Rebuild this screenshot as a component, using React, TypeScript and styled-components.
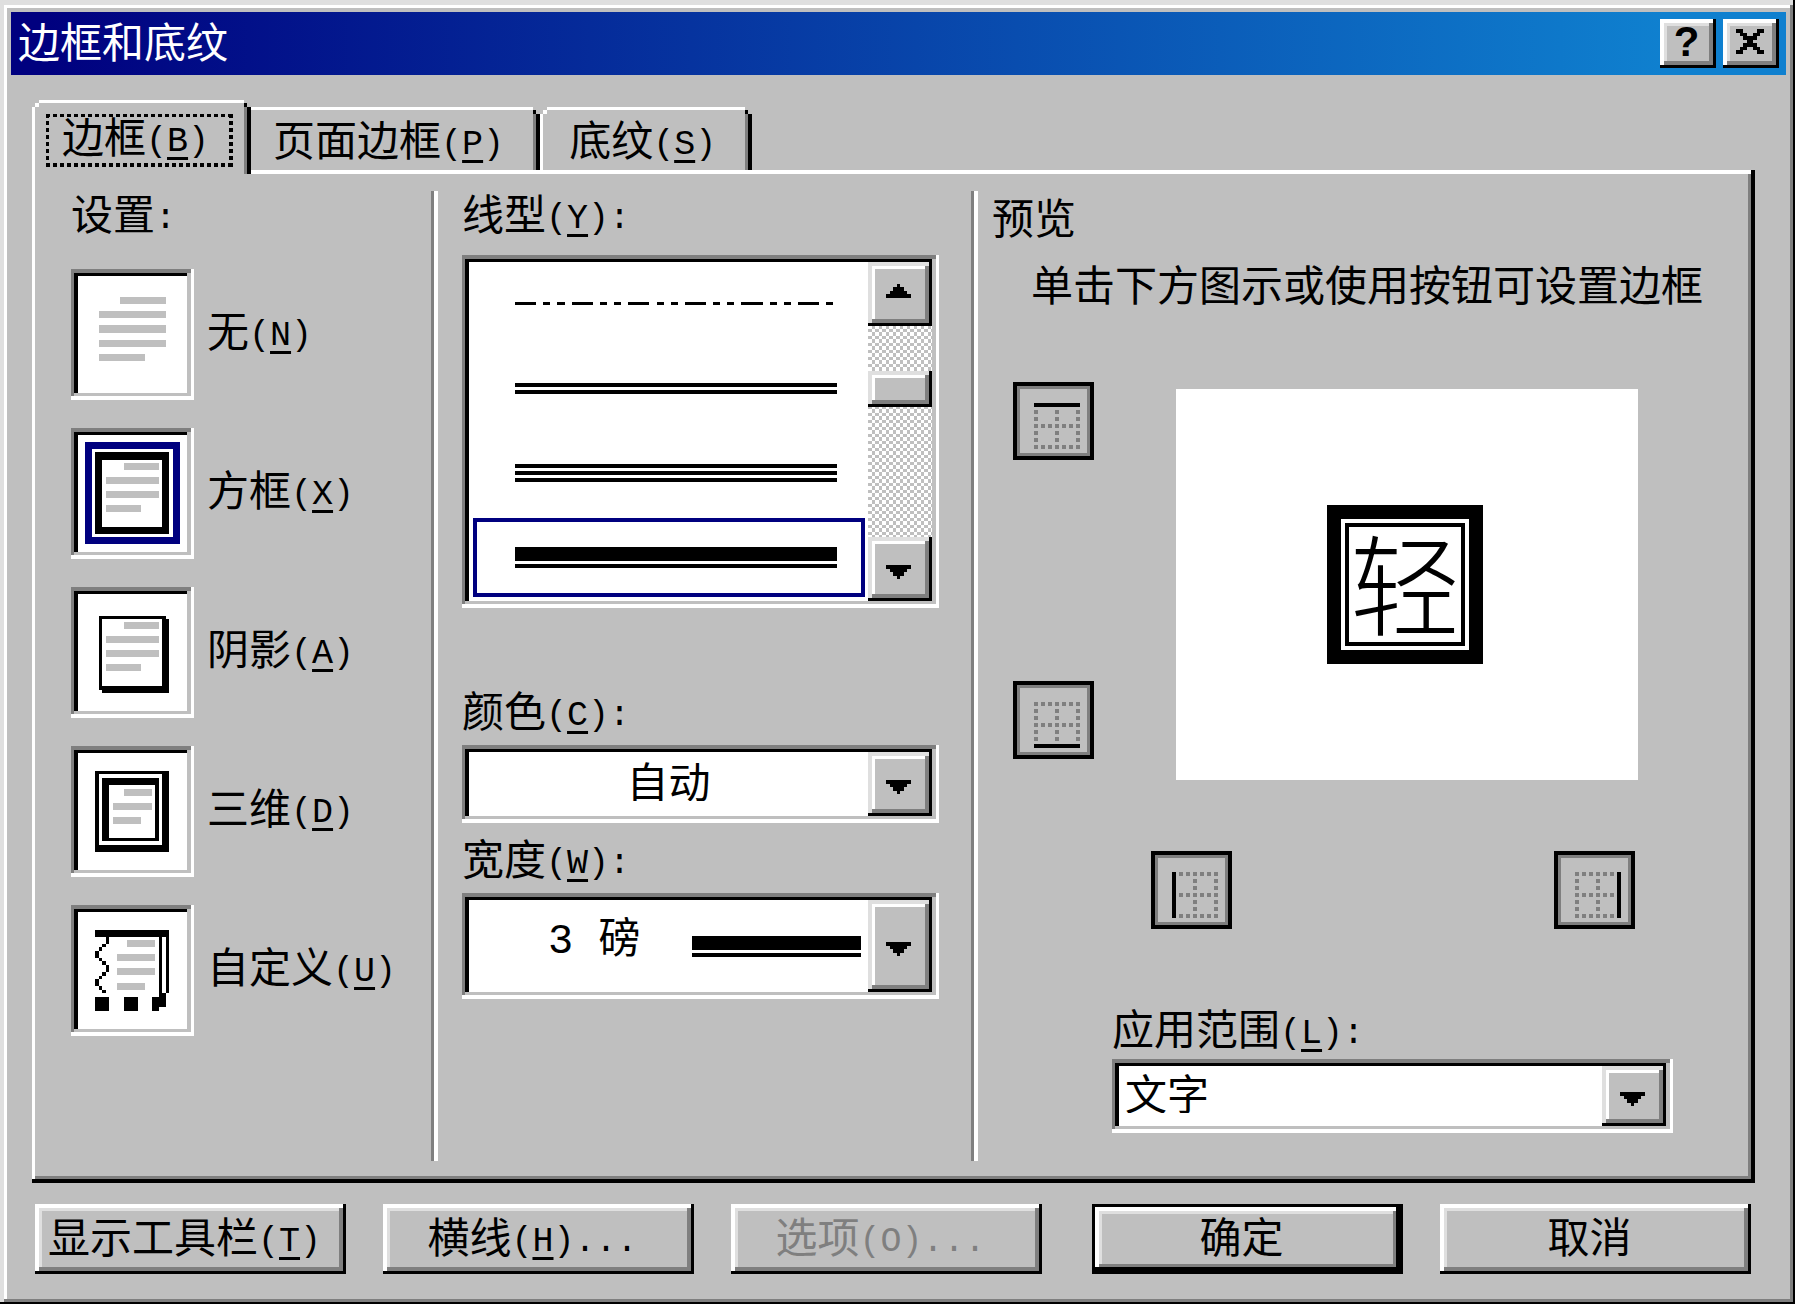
import React, { useState } from "react";
import styled, { createGlobalStyle, css } from "styled-components";

const face = "#bfbfbf";
const light = "#dfdfdf";
const shade = "#7f7f7f";
const navy = "#00007f";

const cjk = `"Noto Sans CJK SC", "Liberation Sans", sans-serif`;
const mono = `"Liberation Mono", "Noto Sans CJK SC", monospace`;

const GlobalStyle = createGlobalStyle`
  *, *::before, *::after { box-sizing: border-box; }
  body { margin: 0; background: ${face}; }
  button, input, select { font: inherit; color: inherit; margin: 0; border: 0; border-radius: 0; outline: 0; }
`;

const raised = css`
  background: ${face};
  box-shadow: inset -3px -3px #000, inset 4px 4px #fff, inset -7px -7px ${shade}, inset 7px 7px ${light};
`;

const raisedSoft = css`
  background: ${face};
  box-shadow: inset -3px -3px #000, inset 4px 4px ${light}, inset -7px -7px ${shade}, inset 7px 7px #fff;
`;

const sunken = css`
  background: #fff;
  box-shadow: inset -3px -4px #fff, inset 3px 4px ${shade}, inset -7px -7px ${face}, inset 7px 7px #000;
`;

const Window = styled.main`
  display: flex;
  flex-direction: column;
  min-height: 100vh;
  padding: 12px 9px 30px 11px;
  background: ${face};
  box-shadow: inset -2px -2px #000, inset 4px 5px ${light}, inset -5px -5px ${shade}, inset 7px 8px #fff;
  color: #000;
  font-family: ${cjk};
  font-size: 42px;
  line-height: 42px;
  white-space: nowrap;
`;

const TitleBar = styled.header`
  display: flex;
  gap: 7px;
  height: 63px;
  padding: 7px;
  background: linear-gradient(to right, ${navy} 2%, #0f80cf 93%);
`;

const Title = styled.h1`
  flex: 1;
  margin: 0;
  font-size: 42px;
  font-weight: 400;
  line-height: 42px;
  color: #fff;
`;

const CaptionButton = styled.button`
  ${raised}
  display: flex;
  align-items: center;
  justify-content: center;
  width: 56px;
  padding: 0 3px 4px 0;
  font-family: "Liberation Sans", sans-serif;
  font-size: 42px;
  font-weight: 700;
  line-height: 42px;
`;

const TabList = styled.div`
  display: flex;
  align-items: flex-end;
  margin: 25px 31px 0 21px;
`;

const Tab = styled.button<{ $active?: boolean }>`
  position: relative;
  z-index: ${(p) => (p.$active ? 1 : 0)};
  height: ${(p) => (p.$active ? 74 : 63)}px;
  margin-bottom: ${(p) => (p.$active ? -4 : 0)}px;
  padding: ${(p) => (p.$active ? "14px 18px 7px 14px" : "10px 36px 11px 29px")};
  background:
    linear-gradient(#fff, #fff) 3px 3px / 4px 4px no-repeat,
    linear-gradient(#fff, #fff) 7px 0 / calc(100% - 14px) 3px no-repeat,
    linear-gradient(#fff, #fff) 0 7px / 3px 100% no-repeat,
    linear-gradient(#000, #000) right 4px top 3px / 3px 4px no-repeat,
    linear-gradient(#000, #000) right 0 top 7px / 4px 100% no-repeat,
    linear-gradient(${shade}, ${shade}) right 4px top 7px / 3px 100% no-repeat,
    ${face};
  text-align: left;
  line-height: 42px;

  &:nth-child(2) { margin-left: -7px; }
`;

const dotsAcross = "repeating-linear-gradient(to right, #000 0 4px, transparent 4px 7px)";
const dotsDown = "repeating-linear-gradient(to bottom, #000 0 4px, transparent 4px 7px)";

const FocusRing = styled.span`
  display: block;
  padding: 0 24px 11px 16px;
  background:
    ${dotsAcross} 0 0 / 100% 3px no-repeat,
    ${dotsAcross} 0 100% / 100% 4px no-repeat,
    ${dotsDown} 0 0 / 3px 100% no-repeat,
    ${dotsDown} 100% 0 / 4px 100% no-repeat;
`;

const Half = styled.span`
  font-family: ${mono};
  font-size: 35px;
  line-height: 0;
  vertical-align: 2px;

  u {
    text-decoration-thickness: 3px;
    text-underline-offset: 6px;
    text-decoration-skip-ink: none;
  }
`;

const Panel = styled.section`
  flex: 1;
  display: grid;
  grid-template-columns: 396fr 7px 533fr 7px 770fr;
  margin: 0 31px 0 21px;
  padding: 21px 7px 22px 3px;
  box-shadow: inset -4px -4px #000, inset 3px 4px #fff, inset -7px -7px ${shade};
`;

const Divider = styled.div`
  background: linear-gradient(to right, ${shade} 3px, #fff 3px);
`;

const SettingsColumn = styled.fieldset`
  display: flex;
  flex-direction: column;
  gap: 28px;
  min-width: 0;
  margin: 0;
  padding: 0 0 0 36px;
  border: 0;
`;

const Legend = styled.legend`
  float: left;
  padding: 0;
  margin-bottom: 8px;
`;

const Setting = styled.label`
  display: grid;
  grid-template-columns: 123px 1fr;
  grid-template-rows: 131px;
  align-items: center;
  column-gap: 13px;

  svg { grid-area: 1 / 1; pointer-events: none; }
`;

const SettingRadio = styled.input`
  ${sunken}
  grid-area: 1 / 1;
  appearance: none;
  width: 123px;
  height: 131px;
`;

const SettingName = styled.span`
  padding-bottom: 12px;
`;

const StyleColumn = styled.div`
  display: flex;
  flex-direction: column;
  padding: 0 32px 0 24px;
`;

const Field = styled.div<{ $above?: number; $gap?: number }>`
  display: flex;
  flex-direction: column;
  gap: ${(p) => p.$gap ?? 15}px;
  margin-top: ${(p) => p.$above ?? 0}px;
`;

const ListBox = styled.div`
  ${sunken}
  display: grid;
  grid-template-columns: 1fr 64px;
  height: 353px;
  padding: 7px;
`;

const LineItems = styled.div`
  display: grid;
  grid-template-rows: repeat(4, 1fr);
`;

const LineItem = styled.label`
  display: grid;
  grid-template-columns: 1fr;
  align-items: center;
  padding: 2px 3px 4px 4px;
`;

const LineRadio = styled.input`
  grid-area: 1 / 1;
  appearance: none;
  align-self: stretch;

  &:checked { border: 4px solid ${navy}; }
`;

const LineArt = styled.div`
  grid-area: 1 / 1;
  display: grid;
  padding: 0 28px 0 42px;
  pointer-events: none;
`;

const ScrollBar = styled.div`
  display: flex;
  flex-direction: column;
  background: repeating-conic-gradient(at 4px 4px, ${face} 0 25%, #fff 0 50%) 0 0 / 7px 7px;
`;

const ScrollButton = styled.button<{ $up?: boolean }>`
  ${raisedSoft}
  display: flex;
  align-items: center;
  justify-content: center;
  height: 64px;
  padding: ${(p) => (p.$up ? "0 3px 7px 0" : "6px 3px 0 0")};
`;

const ScrollTrack = styled.div`
  flex: 1;
  padding-top: 45px;
`;

const ScrollThumb = styled.div`
  ${raisedSoft}
  height: 36px;
`;

const Combo = styled.div<{ $height: number }>`
  ${sunken}
  display: grid;
  grid-template-columns: 1fr 64px;
  height: ${(p) => p.$height}px;
  padding: 7px;
`;

const Select = styled.select<{ $centred?: boolean; $indent?: number; $mono?: boolean }>`
  grid-area: 1 / 1 / 2 / 3;
  appearance: none;
  min-width: 0;
  padding: 0 64px 8px ${(p) => p.$indent ?? 0}px;
  background: transparent;
  line-height: ${(p) => (p.$mono ? 64 : 42)}px;
  font-family: ${(p) => (p.$mono ? mono : cjk)};
  text-align-last: ${(p) => (p.$centred ? "center" : "left")};
`;

const ComboArrow = styled.span`
  ${raisedSoft}
  grid-area: 1 / 2;
  display: flex;
  align-items: center;
  justify-content: center;
  padding: 6px 3px 0 0;
  pointer-events: none;
`;

const WidthSample = styled.div`
  grid-area: 1 / 1;
  display: grid;
  align-self: center;
  justify-self: end;
  width: 169px;
  margin-right: 7px;
  pointer-events: none;
`;

const PreviewColumn = styled.div`
  display: flex;
  flex-direction: column;
  padding-top: 4px;
`;

const PreviewHeading = styled.h2`
  margin: 0 0 25px;
  padding-left: 14px;
  font-size: 42px;
  font-weight: 400;
  line-height: 42px;
`;

const Hint = styled.p`
  margin: 0 0 78px;
  padding-left: 53px;
`;

const Stage = styled.div`
  display: flex;
  gap: 82px;
  padding: 0 110px 0 35px;
`;

const SideButtons = styled.div`
  display: flex;
  flex-direction: column;
  justify-content: space-between;
  padding-bottom: 21px;
`;

const BottomButtons = styled.div`
  display: flex;
  justify-content: space-between;
  margin-top: 71px;
  padding: 0 113px 0 173px;
`;

const EdgeButton = styled.button`
  display: block;
  width: 81px;
  height: 78px;
  padding: 21px 14px 11px 21px;
  background: ${face};
  box-shadow: inset 0 0 0 4px #000, inset 0 0 0 7px ${shade};

  svg { display: block; }
`;

const Canvas = styled.div`
  flex: 1;
  display: flex;
  align-items: center;
  justify-content: center;
  height: 391px;
  margin-top: 7px;
  padding-right: 4px;
  background: #fff;
`;

const FramedText = styled.div`
  display: flex;
  align-items: center;
  justify-content: center;
  width: 156px;
  height: 159px;
  padding-bottom: 10px;
  box-shadow: inset 0 0 0 14px #000, inset 0 0 0 18px #fff, inset 0 0 0 22px #000;
  font-size: 110px;
  font-weight: 300;
  line-height: 110px;
`;

const ApplyField = styled(Field)`
  padding: 0 75px 0 134px;
`;

const Actions = styled.footer`
  display: flex;
  justify-content: space-between;
  gap: 37px;
  margin: 21px 35px 0 24px;
`;

const ActionGroup = styled.div`
  display: flex;
  gap: 37px;
`;

const ActionButton = styled.button<{ $default?: boolean }>`
  ${raised}
  width: 311px;
  height: 70px;
  padding: 0 12px 8px 0;
  line-height: 42px;

  &:disabled { color: ${shade}; }

  ${(p) =>
    p.$default &&
    css`
      box-shadow: inset 0 0 0 3px #000, inset -7px -7px #000, inset 7px 7px #fff,
        inset -10px -10px ${shade}, inset 10px 10px ${light};
    `}
`;

function Key({ k, after = "", plain = false }: { k: string; after?: string; plain?: boolean }) {
  return (
    <Half>
      ({plain ? k : <u>{k}</u>}){after}
    </Half>
  );
}

type Box = [number, number, number, number];

// Boxes are given as left, top, right, bottom.
function Boxes({ items, fill }: { items: Box[]; fill: string }) {
  return (
    <>
      {items.map(([l, t, r, b]) => (
        <rect key={`${l}-${t}-${r}-${b}`} x={l} y={t} width={r - l} height={b - t} fill={fill} />
      ))}
    </>
  );
}

const arrowDown: Box[] = [[0, 0, 25, 4], [4, 4, 21, 7], [7, 7, 18, 11], [11, 11, 14, 14]];
const arrowUp: Box[] = [[11, 0, 14, 3], [7, 3, 18, 7], [4, 7, 21, 10], [0, 10, 25, 14]];

function Arrow({ up = false }: { up?: boolean }) {
  return (
    <svg width="25" height="14" shapeRendering="crispEdges" aria-hidden="true">
      <Boxes fill="#000" items={up ? arrowUp : arrowDown} />
    </svg>
  );
}

function CloseIcon() {
  return (
    <svg width="28" height="25" shapeRendering="crispEdges" aria-hidden="true">
      <Boxes
        fill="#000"
        items={[
          [0, 0, 7, 4], [21, 0, 28, 4],
          [4, 4, 11, 7], [17, 4, 24, 7],
          [7, 7, 21, 11], [11, 11, 17, 14], [7, 14, 21, 18],
          [4, 18, 11, 21], [17, 18, 24, 21],
          [0, 21, 7, 25], [21, 21, 28, 25],
        ]}
      />
    </svg>
  );
}

const pageLines: Box[] = [[53, 35, 88, 42], [35, 49, 88, 56], [35, 63, 88, 70], [35, 77, 70, 84]];

const settingArt: Record<string, React.ReactNode> = {
  none: (
    <Boxes fill={face} items={[[49, 28, 95, 35], [28, 42, 95, 49], [28, 56, 95, 64], [28, 71, 95, 78], [28, 85, 74, 92]]} />
  ),
  box: (
    <>
      <Boxes fill="#000" items={[[24, 24, 98, 106]]} />
      <Boxes fill="#fff" items={[[31, 32, 91, 99]]} />
      <Boxes fill={face} items={pageLines} />
    </>
  ),
  shadow: (
    <>
      <Boxes fill="#000" items={[[28, 29, 95, 103], [31, 32, 98, 106]]} />
      <Boxes fill="#fff" items={[[31, 32, 91, 99]]} />
      <Boxes fill={face} items={pageLines} />
    </>
  ),
  threeD: (
    <>
      <Boxes fill="#000" items={[[24, 25, 98, 106]]} />
      <Boxes fill="#fff" items={[[28, 28, 91, 99]]} />
      <Boxes fill="#000" items={[[31, 32, 88, 95]]} />
      <Boxes fill="#fff" items={[[38, 39, 84, 92]]} />
      <Boxes fill={face} items={[[53, 43, 81, 50], [42, 57, 81, 64], [42, 71, 70, 78]]} />
    </>
  ),
  custom: (
    <>
      <Boxes
        fill="#000"
        items={[
          [24, 25, 98, 32], [88, 32, 91, 92], [95, 32, 98, 88], [88, 88, 95, 102], [81, 92, 88, 106],
          [24, 92, 38, 106], [53, 92, 67, 106],
          [35, 32, 38, 39], [31, 39, 35, 42], [28, 42, 31, 46], [24, 46, 28, 53], [28, 53, 31, 56],
          [31, 56, 35, 60], [35, 60, 38, 67], [31, 67, 35, 71], [28, 71, 31, 74], [24, 74, 28, 81],
          [28, 81, 31, 85], [31, 85, 35, 88],
        ]}
      />
      <Boxes fill={face} items={[[56, 35, 84, 42], [46, 49, 84, 56], [46, 63, 84, 70], [46, 78, 74, 85]]} />
    </>
  ),
};

const settings = [
  { id: "none", name: "无", k: "N" },
  { id: "box", name: "方框", k: "X" },
  { id: "shadow", name: "阴影", k: "A" },
  { id: "threeD", name: "三维", k: "D" },
  { id: "custom", name: "自定义", k: "U" },
];

// Each style is a stack of [offset, thickness] bars.
const lineStyles: { name: string; height: number; bars: [number, number][]; dashed?: boolean }[] = [
  { name: "双点划线", height: 3, bars: [[0, 3]], dashed: true },
  { name: "双线", height: 11, bars: [[0, 4], [7, 4]] },
  { name: "三线", height: 18, bars: [[0, 4], [7, 4], [14, 4]] },
  { name: "粗细双线", height: 21, bars: [[0, 14], [17, 4]] },
];

function LineSample({ index }: { index: number }) {
  const { height, bars, dashed } = lineStyles[index];
  return (
    <svg width="100%" height={height} shapeRendering="crispEdges" aria-hidden="true">
      {dashed ? (
        <line x1="0" y1="50%" x2="100%" y2="50%" stroke="#000" strokeWidth={height} pathLength={91} strokeDasharray="6 2 2 2 2 2" />
      ) : (
        bars.map(([y, h]) => <rect key={y} y={y} width="100%" height={h} />)
      )}
    </svg>
  );
}

type Edge = "top" | "bottom" | "left" | "right";

const edgeBars: Record<Edge, Box> = {
  top: [0, 0, 13, 1],
  bottom: [0, 12, 13, 13],
  left: [0, 0, 1, 13],
  right: [12, 0, 13, 13],
};

const gridDots: Box[] = [];
for (let y = 0; y <= 12; y += 2) {
  for (let x = 0; x <= 12; x += 2) {
    if (x % 6 === 0 || y % 6 === 0) gridDots.push([x, y, x + 1, y + 1]);
  }
}

function EdgeIcon({ edge }: { edge: Edge }) {
  return (
    <svg width="46" height="46" viewBox="0 0 13 13" shapeRendering="crispEdges" aria-hidden="true">
      <Boxes fill={shade} items={gridDots} />
      <Boxes fill="#000" items={[edgeBars[edge]]} />
    </svg>
  );
}

export default function App() {
  const [setting, setSetting] = useState("box");
  const [line, setLine] = useState(3);

  return (
    <>
      <GlobalStyle />
      <Window>
        <TitleBar>
          <Title>边框和底纹</Title>
          <CaptionButton type="button" aria-label="帮助">?</CaptionButton>
          <CaptionButton type="button" aria-label="关闭">
            <CloseIcon />
          </CaptionButton>
        </TitleBar>

        <TabList role="tablist">
          <Tab type="button" role="tab" aria-selected="true" $active>
            <FocusRing>边框<Key k="B" /></FocusRing>
          </Tab>
          <Tab type="button" role="tab" aria-selected="false">页面边框<Key k="P" /></Tab>
          <Tab type="button" role="tab" aria-selected="false">底纹<Key k="S" /></Tab>
        </TabList>

        <Panel role="tabpanel">
          <SettingsColumn>
            <Legend>设置<Half>:</Half></Legend>
            {settings.map((s) => (
              <Setting key={s.id}>
                <SettingRadio type="radio" name="setting" checked={setting === s.id} onChange={() => setSetting(s.id)} />
                <svg width="123" height="131" shapeRendering="crispEdges" aria-hidden="true">
                  {setting === s.id && (
                    <>
                      <Boxes fill={navy} items={[[14, 14, 109, 116]]} />
                      <Boxes fill="#fff" items={[[21, 21, 102, 109]]} />
                    </>
                  )}
                  {settingArt[s.id]}
                </svg>
                <SettingName>{s.name}<Key k={s.k} /></SettingName>
              </Setting>
            ))}
          </SettingsColumn>

          <Divider />

          <StyleColumn>
            <Field $gap={22}>
              <span id="line-label">线型<Key k="Y" after=":" /></span>
              <ListBox role="radiogroup" aria-labelledby="line-label">
                <LineItems>
                  {lineStyles.map((l, i) => (
                    <LineItem key={l.name}>
                      <LineRadio type="radio" name="line" aria-label={l.name} checked={line === i} onChange={() => setLine(i)} />
                      <LineArt><LineSample index={i} /></LineArt>
                    </LineItem>
                  ))}
                </LineItems>
                <ScrollBar>
                  <ScrollButton type="button" aria-label="向上滚动" $up><Arrow up /></ScrollButton>
                  <ScrollTrack><ScrollThumb /></ScrollTrack>
                  <ScrollButton type="button" aria-label="向下滚动"><Arrow /></ScrollButton>
                </ScrollBar>
              </ListBox>
            </Field>

            <Field $above={80}>
              <label htmlFor="color">颜色<Key k="C" after=":" /></label>
              <Combo $height={78}>
                <Select id="color" $centred>
                  <option>自动</option>
                </Select>
                <ComboArrow><Arrow /></ComboArrow>
              </Combo>
            </Field>

            <Field $above={13}>
              <label htmlFor="width">宽度<Key k="W" after=":" /></label>
              <Combo $height={106}>
                <Select id="width" $mono $indent={79}>
                  <option>3 磅</option>
                </Select>
                <WidthSample><LineSample index={line} /></WidthSample>
                <ComboArrow><Arrow /></ComboArrow>
              </Combo>
            </Field>
          </StyleColumn>

          <Divider />

          <PreviewColumn>
            <PreviewHeading>预览</PreviewHeading>
            <Hint>单击下方图示或使用按钮可设置边框</Hint>
            <Stage>
              <SideButtons>
                <EdgeButton type="button" aria-label="上框线"><EdgeIcon edge="top" /></EdgeButton>
                <EdgeButton type="button" aria-label="下框线"><EdgeIcon edge="bottom" /></EdgeButton>
              </SideButtons>
              <Canvas>
                <FramedText>轻</FramedText>
              </Canvas>
            </Stage>
            <BottomButtons>
              <EdgeButton type="button" aria-label="左框线"><EdgeIcon edge="left" /></EdgeButton>
              <EdgeButton type="button" aria-label="右框线"><EdgeIcon edge="right" /></EdgeButton>
            </BottomButtons>
            <ApplyField $above={77} $gap={11}>
              <label htmlFor="apply">应用范围<Key k="L" after=":" /></label>
              <Combo $height={74}>
                <Select id="apply" $indent={6}>
                  <option>文字</option>
                </Select>
                <ComboArrow><Arrow /></ComboArrow>
              </Combo>
            </ApplyField>
          </PreviewColumn>
        </Panel>

        <Actions>
          <ActionGroup>
            <ActionButton type="button">显示工具栏<Key k="T" /></ActionButton>
            <ActionButton type="button">横线<Key k="H" after="..." /></ActionButton>
            <ActionButton type="button" disabled>选项<Key k="O" after="..." plain /></ActionButton>
          </ActionGroup>
          <ActionGroup>
            <ActionButton type="button" $default>确定</ActionButton>
            <ActionButton type="button">取消</ActionButton>
          </ActionGroup>
        </Actions>
      </Window>
    </>
  );
}
